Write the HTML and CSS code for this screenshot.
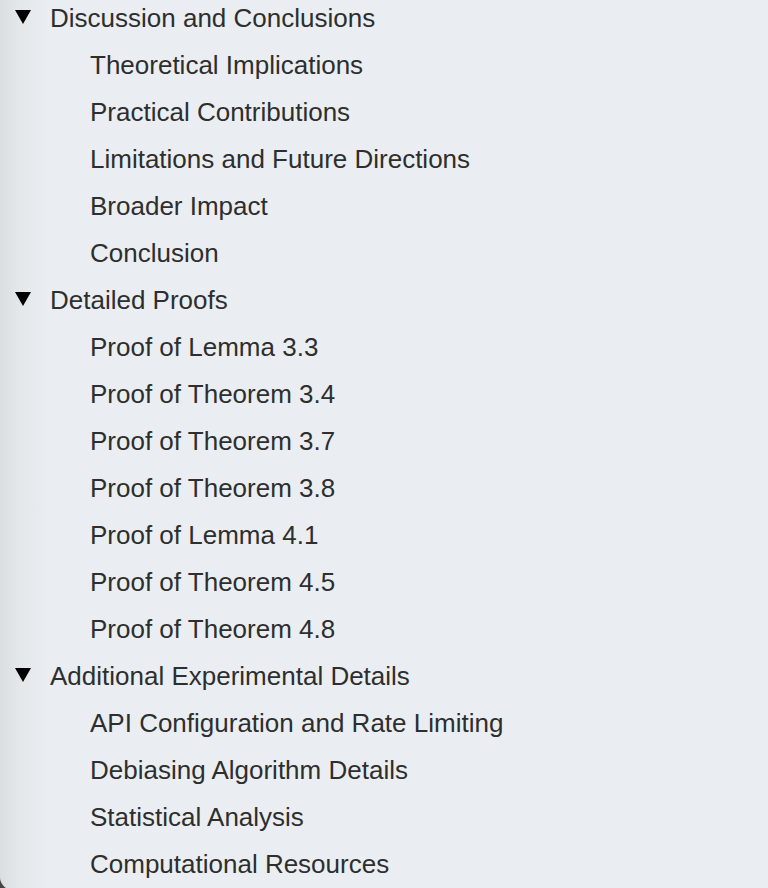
FILE: index.html
```html
<!DOCTYPE html>
<html>
<head>
<meta charset="utf-8">
<link rel="stylesheet" href="styles.css">
</head>
<body>
<div class="panel">
  <ul class="toc">
    <li class="section">
      <div class="head"><svg class="caret" viewBox="0 0 16 14" width="16" height="14"><polygon points="0,0 16,0 8,14" /></svg><span>Discussion and Conclusions</span></div>
      <ul class="sub">
        <li>Theoretical Implications</li>
        <li>Practical Contributions</li>
        <li>Limitations and Future Directions</li>
        <li>Broader Impact</li>
        <li>Conclusion</li>
      </ul>
    </li>
    <li class="section">
      <div class="head"><svg class="caret" viewBox="0 0 16 14" width="16" height="14"><polygon points="0,0 16,0 8,14" /></svg><span>Detailed Proofs</span></div>
      <ul class="sub">
        <li>Proof of Lemma 3.3</li>
        <li>Proof of Theorem 3.4</li>
        <li>Proof of Theorem 3.7</li>
        <li>Proof of Theorem 3.8</li>
        <li>Proof of Lemma 4.1</li>
        <li>Proof of Theorem 4.5</li>
        <li>Proof of Theorem 4.8</li>
      </ul>
    </li>
    <li class="section">
      <div class="head"><svg class="caret" viewBox="0 0 16 14" width="16" height="14"><polygon points="0,0 16,0 8,14" /></svg><span>Additional Experimental Details</span></div>
      <ul class="sub">
        <li>API Configuration and Rate Limiting</li>
        <li>Debiasing Algorithm Details</li>
        <li>Statistical Analysis</li>
        <li>Computational Resources</li>
      </ul>
    </li>
  </ul>
</div>
</body>
</html>
```

FILE: styles.css
```css
html, body {
  margin: 0;
  padding: 0;
  height: 888px;
  overflow: hidden;
  background: #444444;
}

.panel {
  height: 890px;
  overflow: hidden;
  border-bottom-left-radius: 13px;
  background: linear-gradient(to right, #dadee1 0px, #e3e7ea 18px, #eaeef2 48px, #eaeef2 100%);
  font-family: "Liberation Sans", Arial, Helvetica, sans-serif;
  font-size: 26px;
  color: #2e2e2e;
}

.toc {
  list-style: none;
  margin: -5px 0 0 0;
  padding: 0;
}

.head {
  display: flex;
  align-items: center;
  height: 47px;
  line-height: 47px;
}

.caret {
  margin-left: 15px;
  margin-right: 19px;
  margin-top: -3px;
  fill: #000000;
  flex: none;
}

.sub {
  list-style: none;
  margin: 0;
  padding: 0 0 0 90px;
}

.sub li {
  height: 47px;
  line-height: 47px;
  white-space: nowrap;
}
```
